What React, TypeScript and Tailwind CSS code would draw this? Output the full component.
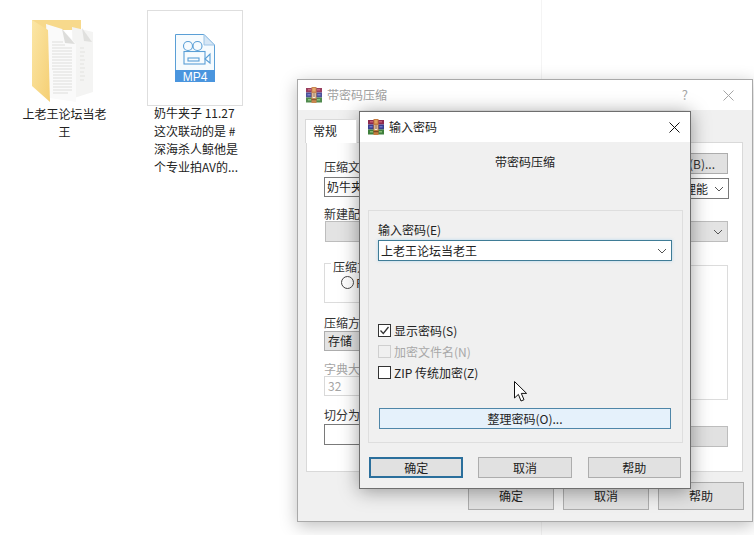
import React from 'react';

const FONT = "font-['Noto_Sans_CJK_SC','Liberation_Sans',sans-serif]";

// stacked-books archive icon used in both window title bars
function RarIcon({ faded = false }: { faded?: boolean }) {
    return (
        <svg width="16" height="16" viewBox="0 0 16 16" className={`shrink-0 ${faded ? 'opacity-90' : ''}`}>
            <rect x="0" y="1" width="16" height="4.5" fill="#8e2a4e" />
            <rect x="0" y="5.5" width="16" height="5" fill="#3a3f8f" />
            <rect x="0" y="10.5" width="16" height="5" fill="#3f7f3c" />
            <rect x="2" y="2" width="3" height="1.5" fill="#c25a70" />
            <rect x="11" y="2" width="3" height="1.5" fill="#c25a70" />
            <rect x="1.5" y="7" width="3" height="1.5" fill="#6d74c9" />
            <rect x="11.5" y="7" width="3" height="1.5" fill="#6d74c9" />
            <rect x="2" y="12" width="3" height="1.5" fill="#86bb72" />
            <rect x="11" y="12" width="3" height="1.5" fill="#86bb72" />
            <rect x="5.5" y="0" width="5" height="16" fill="#c47b3f" />
            <rect x="6.5" y="1" width="3" height="3.5" fill="#e2a15f" />
            <rect x="6.5" y="6" width="3" height="5" fill="#f3ead8" />
            <rect x="7.5" y="6" width="1" height="4" fill="#7a4a24" />
            <rect x="5.5" y="12" width="5" height="1.2" fill="#7a4a24" />
        </svg>
    );
}

function FolderIcon() {
    return (
        <svg width="62" height="84" viewBox="0 0 62 84">
            <defs>
                <linearGradient id="fold" x1="0" y1="0" x2="1" y2="1">
                    <stop offset="0" stopColor="#fbe6a6" />
                    <stop offset="1" stopColor="#f5cf74" />
                </linearGradient>
            </defs>
            <path d="M0 0 H49 V10 H0 Z" fill="#f7d98c" />
            <path d="M40 7 L61 12 V72 L42 78 Z" fill="#f4f4f3" />
            <path d="M50 8 L60 22 L52 21 Z" fill="#e0e0de" />
            <g stroke="#d6d6d3" strokeWidth="0.6">
                <path d="M48 28 H52 M48 32 H53 M48 36 H52 M48 40 H53 M48 44 H52 M48 48 H53 M48 52 H52 M48 56 H53 M48 60 H52" />
            </g>
            <path d="M14 4 L30 9 L44 24 V82 L18 78 Z" fill="#fafafa" />
            <path d="M30 9 L43 24 L33 23 Z" fill="#dddddb" />
            <g stroke="#cdcdca" strokeWidth="0.6">
                <path d="M20 22 H31 M20 25 H33 M20 28 H40 M20 31 H40 M20 34 H40 M20 37 H40 M20 40 H40 M20 43 H40 M20 46 H40 M20 49 H40 M21 52 H40 M21 55 H40 M21 58 H40 M21 61 H40 M21 64 H40 M21 67 H40 M21 70 H40 M21 73 H36" />
            </g>
            <path d="M0 0 L16 10 L18 82 L0 66 Z" fill="url(#fold)" />
        </svg>
    );
}

function Mp4Icon() {
    return (
        <svg width="40" height="48" viewBox="0 0 40 48">
            <path d="M0.5 0.5 H29 L39.5 11 V47.5 H0.5 Z" fill="#f6fbfe" stroke="#5a9fd6" />
            <path d="M29 0.5 V11 H39.5 Z" fill="#d5e6f5" stroke="#9cc4e6" />
            <rect x="0" y="36" width="40" height="12" fill="#4a95de" />
            <g fill="none" stroke="#5a9fd6" strokeWidth="1.1">
                <circle cx="13" cy="12" r="4.5" />
                <circle cx="22.5" cy="12" r="4.5" />
                <rect x="9" y="17.5" width="21" height="12.5" />
                <rect x="13" y="24" width="11" height="3" />
                <path d="M30 25 L35 20 V29 Z" />
            </g>
            <text x="20" y="46.5" textAnchor="middle" fill="#fff" fontSize="12" fontFamily="'Liberation Sans', sans-serif">MP4</text>
        </svg>
    );
}

function Btn({ label, w, h = 'h-[21px]', active = false }: { label: string; w: string; h?: string; active?: boolean }) {
    return (
        <button
            className={`${w} ${h} flex items-center justify-center bg-[#e1e1e1] text-[12px] text-[#222] ${active ? 'border-[2px] border-[#2b6f9c]' : 'border border-[#adadad]'}`}
        >
            {label}
        </button>
    );
}

function Check({ label, checked = false, disabled = false }: { label: string; checked?: boolean; disabled?: boolean }) {
    return (
        <div className={`flex items-center gap-[3px] h-[13px] text-[12px] ${disabled ? 'text-[#a8a8a8]' : 'text-[#222]'}`}>
            <span className={`w-[13px] h-[13px] flex items-center justify-center border ${disabled ? 'border-[#cfcfcf]' : 'border-[#333] bg-white'}`}>
                {checked && (
                    <svg width="11" height="11" viewBox="0 0 11 11">
                        <path d="M1.5 5.5 L4.3 8.5 L9.5 2" fill="none" stroke="#333" strokeWidth="1.3" />
                    </svg>
                )}
            </span>
            {label}
        </div>
    );
}

function Chevron({ color = '#555' }: { color?: string }) {
    return (
        <svg width="10" height="6" viewBox="0 0 10 6" className="shrink-0">
            <path d="M1 1 L5 5 L9 1" fill="none" stroke={color} strokeWidth="1" />
        </svg>
    );
}

function CloseX({ color }: { color: string }) {
    return (
        <svg width="11" height="11" viewBox="0 0 11 11">
            <path d="M0.5 0.5 L10.5 10.5 M10.5 0.5 L0.5 10.5" stroke={color} strokeWidth="1" />
        </svg>
    );
}

function Desktop() {
    return (
        <div className="flex items-start pt-[10px] pl-[11px] gap-[29px]">
            <div className="w-[107px] flex flex-col items-center pt-[10px] text-[12px] leading-[18px] text-[#222] text-center">
                <div className="h-[84px] -ml-[3px]">
                    <FolderIcon />
                </div>
                <div className="mt-[1px] w-[90px]">上老王论坛当老王</div>
            </div>
            <div className="w-[96px] flex flex-col items-center">
                <div className="w-[96px] h-[96px] border border-[#dedede] flex items-center justify-center">
                    <Mp4Icon />
                </div>
                <div className="-mt-[2px] w-[90px] text-[12px] leading-[18px] text-[#222] pl-[4px] whitespace-nowrap">
                    <div>奶牛夹子 11.27</div>
                    <div>这次联动的是 #</div>
                    <div>深海杀人鲸他是</div>
                    <div>个专业拍AV的...</div>
                </div>
            </div>
        </div>
    );
}

function BackWindow() {
    return (
        <div className="absolute left-[297px] top-[79px] w-[456px] h-[443px] border border-[#a9a9a9] bg-[#f0f0f0] shadow-[0_4px_16px_rgba(0,0,0,0.25)] flex flex-col text-[12px] text-[#333]">
            <div className="h-[30px] bg-white flex items-center pl-[8px] pr-[18px] shrink-0">
                <RarIcon faded />
                <span className="ml-[5px] text-[#a0a0a0]">带密码压缩</span>
                <span className="ml-auto text-[#a5a5a5] text-[13px]">?</span>
                <span className="ml-[35px] flex">
                    <CloseX color="#a5a5a5" />
                </span>
            </div>
            <div className="flex-1 px-[8px] pt-[9px] flex flex-col">
                <div className="w-[52px] h-[24px] -ml-px bg-white border border-b-0 border-[#d9d9d9] flex items-center pl-[7px] pb-[2px] text-[#222] relative z-10">常规</div>
                <div className="h-[330px] w-[437px] -mt-px bg-white border border-[#d9d9d9] pl-[17px] pr-[14px] flex justify-between">
                    <div className="w-[190px] pt-[15px] flex flex-col">
                        <div className="h-[17px] leading-[17px]">压缩文件名(A)</div>
                        <div className="h-[20px] mt-[2px] border border-[#7a7a7a] flex items-center pl-[2px] text-[#222]">奶牛夹子</div>
                        <div className="h-[17px] leading-[17px] mt-[8px]">新建配置(F)</div>
                        <div className="h-[21px] mt-[-1px] ml-px border border-[#bdbdbd] bg-[#e3e3e3]" />
                        <div className="h-[40px] mt-[21px] border border-[#dcdcdc] pl-[16px] pt-[12px] relative flex items-start gap-[2px]">
                            <span className="absolute left-[6px] -top-[6px] bg-white px-[2px] leading-[17px]">压缩方式</span>
                            <span className="block w-[13px] h-[13px] rounded-full border border-[#444]" />
                            <span className="leading-[13px]">RAR</span>
                        </div>
                        <div className="h-[17px] leading-[17px] mt-[11px]">压缩方式(M)</div>
                        <div className="h-[20px] border border-[#adadad] bg-[#e3e3e3] flex items-center pl-[3px] text-[#222]">存储</div>
                        <div className="h-[17px] leading-[17px] mt-[9px] text-[#a5a5a5]">字典大小(I)</div>
                        <div className="h-[20px] -mt-[1px] border border-[#d9d9d9] flex items-center pl-[3px] text-[#a5a5a5]">32</div>
                        <div className="h-[17px] leading-[17px] mt-[10px]">切分为分卷(V)</div>
                        <div className="h-[21px] mt-[1px] border border-[#7a7a7a]" />
                    </div>
                    <div className="w-[190px] pt-[10px] flex flex-col items-end">
                        <div className="w-[190px] h-[21px] border border-[#adadad] bg-[#e1e1e1] flex items-center justify-end pr-[12px] text-[#333]">(B)...</div>
                        <div className="w-[190px] h-[21px] mt-[4px] -mr-px border border-[#7a7a7a] flex items-center justify-end gap-[6px] pr-[4px] text-[#222]">
                            <span>理能</span>
                            <Chevron />
                        </div>
                        <div className="w-[190px] h-[21px] mt-[22px] border border-[#bdbdbd] bg-[#e3e3e3] flex items-center justify-end px-[4px]">
                            <Chevron />
                        </div>
                        <div className="w-[190px] h-[135px] mt-[23px] border border-[#dcdcdc]" />
                        <div className="w-[190px] h-[21px] mt-[26px] border border-[#bdbdbd] bg-[#e1e1e1]" />
                    </div>
                </div>
                <div className="flex justify-end gap-[9px] mt-[10px]">
                    <Btn label="确定" w="w-[86px]" h="h-[28px]" />
                    <Btn label="取消" w="w-[86px]" h="h-[28px]" />
                    <Btn label="帮助" w="w-[86px]" h="h-[28px]" />
                </div>
            </div>
        </div>
    );
}

function PasswordDialog() {
    return (
        <div className="absolute left-[359px] top-[111px] w-[332px] h-[378px] border border-[#6e6e6e] bg-[#f0f0f0] shadow-[0_2px_18px_rgba(0,0,0,0.38)] flex flex-col text-[12px] text-[#222]">
            <div className="h-[30px] bg-white flex items-center pl-[8px] pr-[10px] shrink-0">
                <RarIcon />
                <span className="ml-[5px]">输入密码</span>
                <span className="ml-auto flex">
                    <CloseX color="#111" />
                </span>
            </div>
            <div className="text-center h-[17px] leading-[17px] mt-[11px]">带密码压缩</div>
            <div className="mx-[8px] mt-[40px] h-[233px] w-[315px] border border-[#dedede] pl-[9px] pr-[10px] pt-[10px] flex flex-col">
                <div className="h-[17px] leading-[17px]">输入密码(E)</div>
                <div className="h-[21px] w-[294px] mt-[2px] border border-[#3f7c96] bg-white shadow-[0_0_3px_rgba(120,190,235,0.5)] flex items-center justify-between pl-[2px] pr-[4px]">
                    <span>上老王论坛当老王</span>
                    <Chevron />
                </div>
                <div className="mt-[63px] flex flex-col gap-[8px]">
                    <Check label="显示密码(S)" checked />
                    <Check label="加密文件名(N)" disabled />
                    <Check label="ZIP 传统加密(Z)" />
                </div>
                <div className="h-[21px] w-[292px] mt-[29px] ml-px border border-[#4f86a8] bg-[#e5f1fb] flex items-center justify-center">整理密码(O)...</div>
            </div>
            <div className="flex mx-[9px] mt-[14px]">
                <Btn label="确定" w="w-[95px]" active />
                <Btn label="取消" w="w-[94px] ml-[15px]" />
                <Btn label="帮助" w="w-[94px] ml-[16px]" />
            </div>
            {/* mouse pointer sits over the dialog */}
            <svg width="14" height="22" viewBox="0 0 14 22" className="absolute left-[154px] top-[269px]">
                <path d="M0.5 0.5 V17 L4.4 13.4 L7 20 L10 18.7 L7.3 12.4 L12.6 12.4 Z" fill="#fff" stroke="#111" strokeWidth="1" />
            </svg>
        </div>
    );
}

export default function App() {
    return (
        <div className={`relative w-[754px] h-[535px] overflow-hidden bg-white ${FONT}`}>
            <div className="absolute left-[541px] top-0 bottom-0 w-px bg-[#f4f4f4]" />
            <Desktop />
            <BackWindow />
            <PasswordDialog />
        </div>
    );
}
